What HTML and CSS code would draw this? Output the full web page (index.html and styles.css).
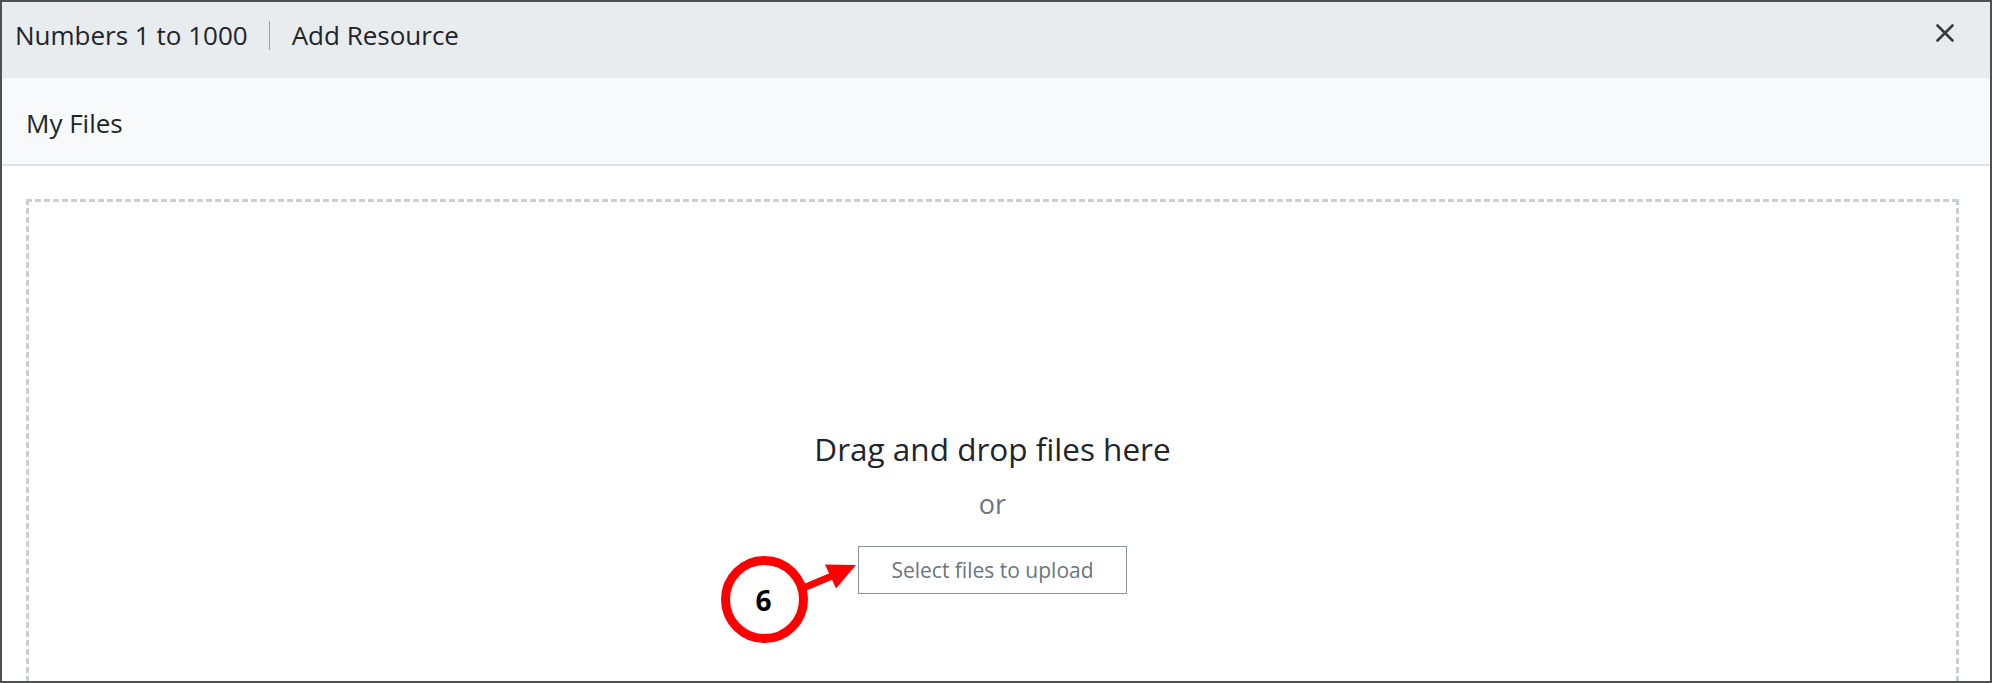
FILE: index.html
```html
<!DOCTYPE html>
<html lang="en">
<head>
<meta charset="utf-8">
<title>Add Resource</title>
<link rel="stylesheet" href="styles.css">
</head>
<body>
<div class="modal">
  <header class="modal-header">
    <div class="breadcrumb">
      <span class="crumb">Numbers 1 to 1000</span>
      <span class="sep"></span>
      <span class="crumb">Add Resource</span>
    </div>
    <button class="close" aria-label="Close">
      <svg width="18" height="18" viewBox="0 0 18 18"><path d="M1.5 1.5 L16.5 16.5 M16.5 1.5 L1.5 16.5" stroke="#343a40" stroke-width="2.6" stroke-linecap="round" fill="none"/></svg>
    </button>
  </header>
  <div class="tabbar"><span class="tab">My Files</span></div>
  <div class="modal-body">
    <div class="dropzone">
      <div class="drop-title">Drag and drop files here</div>
      <div class="drop-or">or</div>
      <button class="select-btn">Select files to upload</button>
    </div>
  </div>
  <svg class="callout" width="170" height="110" viewBox="0 0 170 110">
    <circle cx="64.5" cy="59.5" r="39" fill="#fff" stroke="#ff0000" stroke-width="9"/>
    <text x="63.5" y="71" text-anchor="middle" class="callout-num">6</text>
    <line x1="101" y1="49" x2="132" y2="36" stroke="#ff0000" stroke-width="7"/>
    <polygon points="156,25 125,24.5 136,48.5" fill="#ff0000"/>
  </svg>
</div>
</body>
</html>
```
FILE: styles.css
```css
html, body {
  margin: 0;
  padding: 0;
  background: #ffffff;
}
body {
  width: 1992px;
  height: 683px;
  overflow: hidden;
  font-family: "Open Sans", "Noto Sans", sans-serif;
  color: #212529;
}
.modal {
  position: relative;
  box-sizing: border-box;
  width: 1992px;
  height: 683px;
  border: 2px solid #505050;
  display: flex;
  flex-direction: column;
  overflow: hidden;
}
.modal-header {
  box-sizing: border-box;
  height: 76px;
  flex: none;
  background: #e9ecef;
  display: flex;
  align-items: flex-start;
  justify-content: space-between;
  padding: 15px 36px 0 13px;
}
.breadcrumb {
  display: flex;
  align-items: center;
  font-size: 26px;
  line-height: 36px;
  color: #212529;
}
.sep {
  width: 1px;
  height: 29px;
  background: #9aa0a6;
  margin: 0 22px 0 21px;
}
.close {
  border: 0;
  background: transparent;
  padding: 0;
  margin-top: 7px;
  width: 18px;
  height: 18px;
  display: block;
}
.close svg { display: block; }
.tabbar {
  box-sizing: border-box;
  height: 88px;
  flex: none;
  background: #f8f9fa;
  border-bottom: 2px solid #dee2e6;
  padding: 27px 0 0 24px;
}
.tab {
  font-size: 26px;
  line-height: 36px;
  color: #212529;
}
.modal-body {
  flex: 1;
  padding: 33px 31px 0 24px;
  overflow: hidden;
}
.dropzone {
  box-sizing: border-box;
  height: 640px;
  padding-top: 230px;
  display: flex;
  flex-direction: column;
  align-items: center;
  background-image:
    repeating-linear-gradient(90deg, #c9ced5 0 6px, transparent 6px 9px),
    repeating-linear-gradient(90deg, #c9ced5 0 6px, transparent 6px 9px),
    repeating-linear-gradient(180deg, #c9ced5 0 6px, transparent 6px 9px),
    repeating-linear-gradient(180deg, #c9ced5 0 6px, transparent 6px 9px);
  background-size: 100% 3px, 100% 3px, 3px 100%, 3px 100%;
  background-position: 0 0, 0 100%, 0 0, 100% 0;
  background-repeat: no-repeat;
}
.drop-title {
  font-size: 31.5px;
  line-height: 40px;
  color: #212529;
}
.drop-or {
  margin-top: 18px;
  font-size: 27px;
  line-height: 34px;
  color: #6c757d;
}
.select-btn {
  margin-top: 25px;
  box-sizing: border-box;
  width: 269px;
  height: 48px;
  border: 1px solid #8b9298;
  border-radius: 0;
  background: #ffffff;
  font-family: "Open Sans", "Noto Sans", sans-serif;
  font-size: 21px;
  line-height: 30px;
  color: #6c757d;
  padding: 0;
}
.callout {
  position: absolute;
  left: 698px;
  top: 538px;
}
.callout-num {
  font-family: "Open Sans", "Noto Sans", sans-serif;
  font-weight: 700;
  font-size: 28px;
  fill: #000000;
}
```
